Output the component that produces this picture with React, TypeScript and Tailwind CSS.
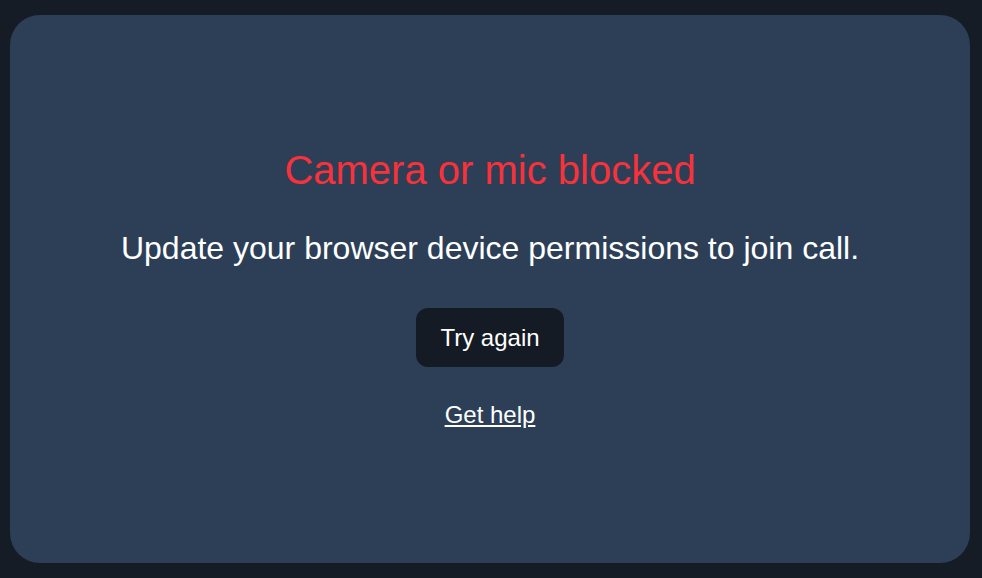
export default function App() {
  return (
    <main
      className="h-[578px] w-[982px] bg-[#161c26] pt-[15px] pl-[10px] pr-[12px] pb-[15px]"
      style={{ fontFamily: '"Liberation Sans", Arial, sans-serif' }}
    >
      <div className="flex h-full flex-col items-center rounded-[30px] bg-[#2c3f57] pt-[133px]">
        <h1 className="text-[40px] leading-[44px] text-[#f7323a]">Camera or mic blocked</h1>
        <p className="mt-[38px] text-[32px] leading-[36px] text-white">
          Update your browser device permissions to join call.
        </p>
        <button className="mt-[42px] h-[59px] rounded-[12px] bg-[#151b24] px-[24px] text-[24px] text-white">
          Try again
        </button>
        <a href="#" className="mt-[34px] text-[24px] leading-[28px] text-white underline">
          Get help
        </a>
      </div>
    </main>
  );
}
